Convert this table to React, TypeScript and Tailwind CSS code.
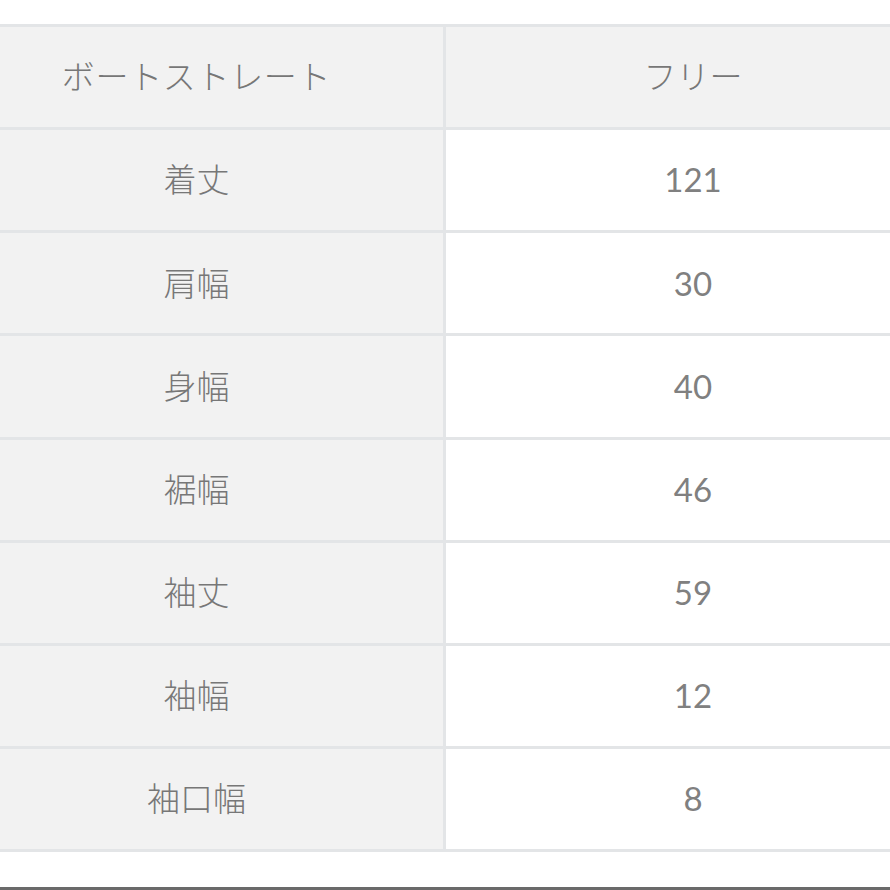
import React from 'react';

const rows: [string, string][] = [
  ['着丈', '121'],
  ['肩幅', '30'],
  ['身幅', '40'],
  ['裾幅', '46'],
  ['袖丈', '59'],
  ['袖幅', '12'],
  ['袖口幅', '8'],
];

const font = { fontFamily: 'Lato, "Noto Sans CJK JP", sans-serif' };

export default function App() {
  return (
    <div className="w-[890px] h-[890px] bg-white overflow-hidden flex flex-col" style={font}>
      <div className="h-[24px]" />
      {/* Size table (wider than the viewport, cropped on both sides) */}
      <div className="ml-[-50px] w-[990px] border-t-[3px] border-[#e3e5e7] text-[33px] font-light text-[#777777]">
        <div className="flex h-[103px] border-b-[3px] border-[#e3e5e7] bg-[#f2f2f2]">
          <div className="w-[496px] border-r-[3px] border-[#e3e5e7] flex items-center justify-center tracking-[0.02em]">
            ボートストレート
          </div>
          <div className="flex-1 flex items-center justify-center">フリー</div>
        </div>
        {rows.map(([label, value]) => (
          <div key={label} className="flex h-[103.2px] border-b-[3px] border-[#e3e5e7]">
            <div className="w-[496px] border-r-[3px] border-[#e3e5e7] bg-[#f2f2f2] flex items-center justify-center">
              {label}
            </div>
            <div className="flex-1 bg-white flex items-center justify-center font-normal text-[#808080]">
              {value}
            </div>
          </div>
        ))}
      </div>
      <div className="flex-1" />
      <div className="h-[3px] bg-[#6a6a6a]" />
    </div>
  );
}
